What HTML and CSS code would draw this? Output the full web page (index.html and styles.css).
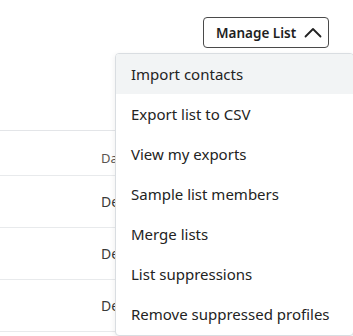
FILE: index.html
```html
<!DOCTYPE html>
<html>
<head>
<meta charset="utf-8">
<link rel="stylesheet" href="styles.css">
</head>
<body>
<div class="page">
  <div class="toolbar">
    <div class="menu-wrap">
      <button class="manage-btn">Manage List
        <svg class="chev" width="18" height="11" viewBox="0 0 18 11"><path d="M1.5 9.5 L9 2 L16.5 9.5" fill="none" stroke="#222" stroke-width="1.8" stroke-linecap="round" stroke-linejoin="round"/></svg>
      </button>
      <ul class="dropdown">
        <li class="item active">Import contacts</li>
        <li class="item">Export list to CSV</li>
        <li class="item">View my exports</li>
        <li class="item">Sample list members</li>
        <li class="item">Merge lists</li>
        <li class="item">List suppressions</li>
        <li class="item">Remove suppressed profiles</li>
      </ul>
    </div>
  </div>
  <div class="table">
    <div class="row head"><span class="cell">Date added</span></div>
    <div class="row"><span class="cell">Dec 12, 2023</span></div>
    <div class="row"><span class="cell">Dec 12, 2023</span></div>
    <div class="row"><span class="cell">Dec 12, 2023</span></div>
  </div>
</div>
</body>
</html>
```

FILE: styles.css
```css
html, body {
  margin: 0;
  padding: 0;
  background: #fff;
  font-family: "Noto Sans", "Open Sans", sans-serif;
  color: #232323;
  overflow: hidden;
}
.page {
  width: 353px;
  height: 336px;
  position: relative;
}
.toolbar {
  display: flex;
  justify-content: flex-end;
  padding: 17px 24px 0 0;
  height: 131px;
  box-sizing: border-box;
  border-bottom: 1px solid #e3e5e8;
}
.menu-wrap {
  position: relative;
  height: 31px;
}
.manage-btn {
  display: flex;
  align-items: center;
  gap: 8px;
  height: 31px;
  width: 126px;
  box-sizing: border-box;
  padding: 0 0 0 12px;
  border: 1px solid #4a4a4a;
  border-radius: 4px;
  background: #fff;
  font-family: inherit;
  font-size: 13.5px;
  font-weight: 600;
  color: #1e1e1e;
}
.chev { display: block; }
.dropdown {
  position: absolute;
  top: 36px;
  left: -88px;
  width: 237px;
  margin: 0;
  padding: 0 0 1px 0;
  list-style: none;
  background: #fff;
  border: 1px solid #d9dde1;
  border-radius: 4px;
  box-shadow: 0 2px 6px rgba(0,0,0,0.08);
  z-index: 5;
  overflow: hidden;
}
.item {
  height: 40px;
  display: flex;
  align-items: center;
  padding-left: 15px;
  font-size: 15px;
  color: #232323;
}
.item.active { background: #f2f4f5; }
.table { width: 100%; }
.row {
  height: 52px;
  border-bottom: 1px solid #e8eaec;
  box-sizing: border-box;
  display: flex;
  align-items: center;
  padding-left: 101px;
  font-size: 14px;
  color: #3a3a3a;
}
.row.head {
  height: 45px;
  padding-top: 9px;
  font-size: 13px;
  color: #5a5550;
}
.cell {
  white-space: nowrap;
  width: 14px;
  overflow: hidden;
}
```
